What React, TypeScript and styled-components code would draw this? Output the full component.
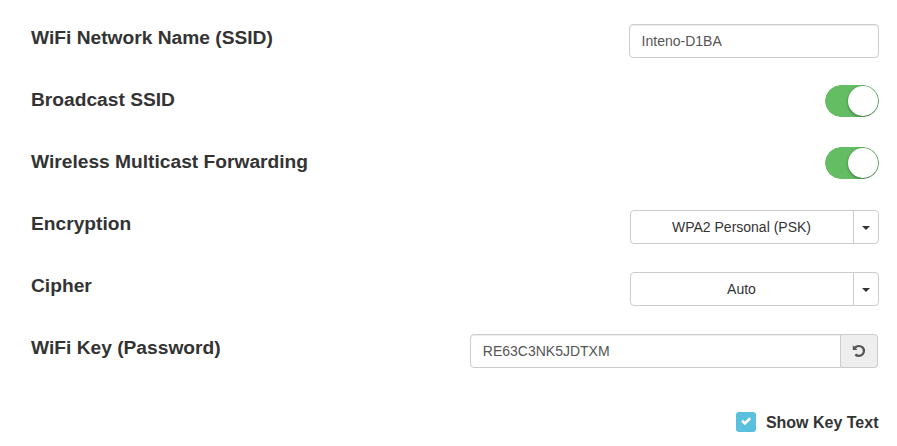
import React, { useState } from "react";
import styled, { createGlobalStyle, css } from "styled-components";

const GlobalStyle = createGlobalStyle`
  *, *::before, *::after { box-sizing: border-box; }
  body {
    margin: 0;
    background: #fff;
    color: #333;
    font: 14px/20px "Liberation Sans", Arial, sans-serif;
  }
`;

const Form = styled.main`
  width: 897px;
  height: 446px;
  overflow: hidden;
  padding: 24px 18px 0 31px;
  background: #fff;
`;

const Row = styled.div`
  display: flex;
  justify-content: space-between;
  align-items: flex-start;
  height: 62px;
`;

const Label = styled.label`
  font-size: 19.2px;
  line-height: 27px;
  font-weight: 700;
  color: #333;
`;

const TextInput = styled.input<{ $grouped?: boolean }>`
  width: ${(p) => (p.$grouped ? 371 : 250)}px;
  height: 34px;
  padding: 6px ${(p) => (p.$grouped ? 11.8 : 11.6)}px;
  border: 1px solid #ccc;
  border-radius: ${(p) => (p.$grouped ? "4px 0 0 4px" : "4px")};
  background: #fff;
  color: #555;
  font: inherit;
  outline: none;
  box-shadow: inset 0 1px 1px rgba(0, 0, 0, 0.075);
`;

const Switch = styled.button<{ $on: boolean }>`
  display: flex;
  justify-content: ${(p) => (p.$on ? "flex-end" : "flex-start")};
  width: 54px;
  height: 32px;
  margin-top: -1px;
  padding: 0;
  border: 1px solid ${(p) => (p.$on ? "#64bd63" : "#dfdfdf")};
  border-radius: 20px;
  background: ${(p) => (p.$on ? "#64bd63" : "#fff")};
  clip-path: inset(0 round 20px);
`;

const Knob = styled.span`
  width: 30px;
  height: 30px;
  border-radius: 50%;
  background: #fff;
  box-shadow: 0 1px 3px rgba(0, 0, 0, 0.4);
`;

const SelectGroup = styled.div`
  display: flex;
  width: 249px;
  height: 34px;
`;

const selectPart = css`
  border: 1px solid #ccc;
  background: #fff;
  color: #333;
  font: inherit;
`;

const SelectValue = styled.button`
  ${selectPart}
  width: 224px;
  padding: 0 1px 0 0;
  border-radius: 4px 0 0 4px;
`;

const SelectToggle = styled.button`
  ${selectPart}
  display: flex;
  align-items: center;
  justify-content: center;
  width: 26px;
  margin-left: -1px;
  padding: 2px 0 0;
  border-radius: 0 4px 4px 0;
`;

const Caret = styled.span`
  border-top: 4px solid #333;
  border-left: 4px solid transparent;
  border-right: 4px solid transparent;
`;

const InputGroup = styled.div`
  display: flex;
  margin-right: 1px;
`;

const Addon = styled.button`
  display: flex;
  align-items: center;
  justify-content: center;
  width: 37px;
  height: 34px;
  padding: 0;
  border: 1px solid #ccc;
  border-left: 0;
  border-radius: 0 4px 4px 0;
  background: #eee;
  color: #555;
`;

const CheckRow = styled.label`
  display: flex;
  justify-content: flex-end;
  align-items: center;
  gap: 10px;
  height: 20px;
  margin-top: 16px;
  font-size: 16px;
  font-weight: 700;
  color: #333;
`;

const CheckBox = styled.span`
  display: flex;
  align-items: center;
  justify-content: center;
  width: 20px;
  height: 20px;
  border-radius: 3px;
  background: #5bc0de;
  color: #fff;
`;

const CheckText = styled.span`
  padding: 2px 0.5px 0 0;
`;

function Toggle({ label }: { label: string }) {
  const [on, setOn] = useState(true);
  return (
    <Row>
      <Label>{label}</Label>
      <Switch $on={on} role="switch" aria-checked={on} aria-label={label} onClick={() => setOn(!on)}>
        <Knob />
      </Switch>
    </Row>
  );
}

function Select({ label, value }: { label: string; value: string }) {
  return (
    <Row>
      <Label>{label}</Label>
      <SelectGroup>
        <SelectValue>{value}</SelectValue>
        <SelectToggle aria-label={label}>
          <Caret />
        </SelectToggle>
      </SelectGroup>
    </Row>
  );
}

const UndoIcon = () => (
  <svg width="14" height="14" viewBox="0 0 14 14" fill="none" stroke="currentColor">
    <path d="M2.8 3.6C5 1.7 8.4 1.4 10.5 3.4A4.9 4.9 0 1 1 3.3 10.4" strokeWidth="2.3" />
    <path d="M.8 1.2V5.9H5.5Z" fill="currentColor" stroke="none" />
  </svg>
);

const CheckIcon = () => (
  <svg width="12" height="12" viewBox="0 0 12 12" fill="none" stroke="currentColor" strokeWidth="2.6">
    <path d="M2.1 4.7L4.9 7.4L10.2 2.3" />
  </svg>
);

export default function App() {
  return (
    <>
      <GlobalStyle />
      <Form>
        <Row>
          <Label>WiFi Network Name (SSID)</Label>
          <TextInput defaultValue="Inteno-D1BA" />
        </Row>
        <Toggle label="Broadcast SSID" />
        <Toggle label="Wireless Multicast Forwarding" />
        <Select label="Encryption" value="WPA2 Personal (PSK)" />
        <Select label="Cipher" value="Auto" />
        <Row>
          <Label>WiFi Key (Password)</Label>
          <InputGroup>
            <TextInput $grouped defaultValue="RE63C3NK5JDTXM" />
            <Addon aria-label="Reset key">
              <UndoIcon />
            </Addon>
          </InputGroup>
        </Row>
        <CheckRow>
          <CheckBox>
            <CheckIcon />
          </CheckBox>
          <CheckText>Show Key Text</CheckText>
        </CheckRow>
      </Form>
    </>
  );
}
